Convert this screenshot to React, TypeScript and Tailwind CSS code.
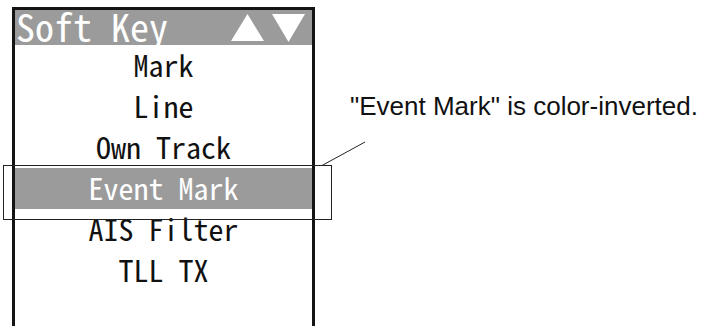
import React from "react";

const ITEMS = ["Mark", "Line", "Own Track", "Event Mark", "AIS Filter", "TLL TX"];
const SELECTED = "Event Mark";

const mono = "font-['Noto_Sans_Mono_CJK_JP','DejaVu_Sans_Mono',monospace]";

export default function App() {
  return (
    <div className="relative w-[701px] h-[326px] overflow-hidden bg-white">
      <div className="flex items-start">
        {/* Soft key panel */}
        <div className="ml-[12px] mt-[7px] w-[303px] h-[330px] shrink-0 border-x-[3px] border-t-[3px] border-[#141414]">
          <div className={`flex items-center justify-between h-[35px] overflow-hidden pl-[1px] pr-[7px] bg-[#9b9b9b] text-white ${mono} text-[38px] leading-none`}>
            <span className="-mt-[3px]">Soft Key</span>
            <div className="flex items-center gap-[8px]">
              <svg width="33" height="27" viewBox="0 0 33 27">
                <polygon points="16.5,0 33,27 0,27" fill="#fff" />
              </svg>
              <svg width="33" height="28" viewBox="0 0 33 28">
                <polygon points="0,0 33,0 16.5,28" fill="#fff" />
              </svg>
            </div>
          </div>
          <div className={`flex flex-col ${mono} text-[30px] leading-none`}>
            {ITEMS.map(item => (
              <div
                key={item}
                className={`flex items-center justify-center h-[41px] pb-[4px] ${
                  item === SELECTED ? "bg-[#9b9b9b] text-white" : "text-[#111]"
                }`}
              >
                {item}
              </div>
            ))}
          </div>
        </div>

        {/* Caption */}
        <p className="ml-[35px] mt-[91px] font-['Liberation_Sans',Arial,sans-serif] text-[26px] leading-[30px] text-[#111] whitespace-nowrap">
          "Event Mark" is color-inverted.
        </p>
      </div>

      {/* Callout frame and leader line */}
      <div className="absolute left-[3px] top-[165px] w-[329px] h-[55px] border border-[#222]" />
      <svg className="absolute left-0 top-0" width="701" height="326">
        <line x1="322" y1="165.5" x2="365" y2="142" stroke="#222" strokeWidth="1" />
      </svg>
    </div>
  );
}
